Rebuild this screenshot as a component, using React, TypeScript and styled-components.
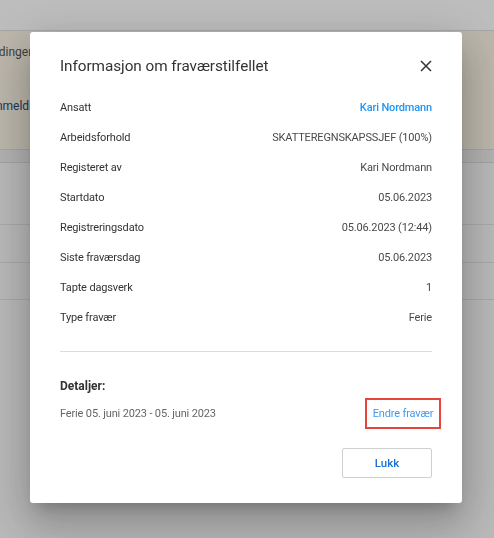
import React from 'react';
import styled, { createGlobalStyle } from 'styled-components';

const GlobalStyle = createGlobalStyle`
  html, body {
    margin: 0;
    padding: 0;
    background: #f8f8f8;
    font-family: Roboto, 'Liberation Sans', Arial, sans-serif;
  }
  * { box-sizing: border-box; }
`;

const Page = styled.div`
  width: 494px;
  height: 538px;
  overflow: hidden;
  background: #f8f8f8;
`;

const TopBar = styled.div`
  height: 31px;
  background: #ffffff;
  border-bottom: 1px solid #e0e0e0;
`;

const Notice = styled.div`
  height: 118px;
  background: #fcf5e6;
  display: flex;
  flex-direction: column;
  padding: 14px 0 0;
  margin-left: -21px;
  gap: 40px;
  font-size: 12px;
  color: #555;
`;

const NoticeLink = styled.span`
  color: #264b7a;
  margin-left: 7px;
`;

const TableHead = styled.div`
  height: 14px;
  border-top: 1px solid #dcdcdc;
  border-bottom: 1px solid #dcdcdc;
  background: #efefef;
`;

const TableRow = styled.div<{ $h: number }>`
  height: ${({ $h }) => $h}px;
  border-bottom: 1px solid #e2e2e2;
`;

const Backdrop = styled.div`
  position: fixed;
  inset: 0;
  background: rgba(0, 0, 0, 0.26);
  display: flex;
  align-items: flex-start;
  justify-content: center;
  padding-top: 32px;
`;

const Dialog = styled.div`
  width: 432px;
  background: #fff;
  border-radius: 3px;
  margin-right: 2px;
  padding: 24px 30px 25px;
  box-shadow: 0 11px 15px -7px rgba(0, 0, 0, 0.2),
    0 24px 38px 3px rgba(0, 0, 0, 0.14), 0 9px 46px 8px rgba(0, 0, 0, 0.12);
`;

const Header = styled.div`
  display: flex;
  align-items: center;
  justify-content: space-between;
  height: 20px;
  margin-bottom: 16px;
`;

const Title = styled.h2`
  margin: 0;
  font-size: 15.3px;
  font-weight: 400;
  letter-spacing: -0.05px;
  color: #333;
  line-height: 20px;
`;

const CloseButton = styled.button`
  border: none;
  background: none;
  padding: 0;
  margin-right: -1px;
  width: 14px;
  height: 14px;
  display: flex;
  align-items: center;
  justify-content: center;
  cursor: pointer;
`;

const InfoRow = styled.div`
  display: flex;
  align-items: center;
  justify-content: space-between;
  height: 30px;
  font-size: 11px;
  letter-spacing: -0.15px;
`;

const Label = styled.span`
  color: #333;
`;

const Value = styled.span<{ $link?: boolean }>`
  color: ${({ $link }) => ($link ? '#2196f3' : '#4a4a4a')};
  font-weight: ${({ $link }) => ($link ? 500 : 400)};
`;

const Divider = styled.hr`
  border: none;
  border-top: 1px solid #d8dde3;
  margin: 19px 0 0;
`;

const SectionTitle = styled.div`
  margin-top: 25px;
  font-size: 12px;
  line-height: 18px;
  font-weight: 700;
  color: #333;
`;

const DetailRow = styled.div`
  margin-top: 3px;
  display: flex;
  align-items: center;
  justify-content: space-between;
  font-size: 11px;
  letter-spacing: -0.15px;
  color: #666;
  margin-right: -9px;
`;

const EditLink = styled.a`
  color: #3f9af0;
  text-decoration: none;
  border: 2px solid #e5453d;
  height: 31px;
  width: 76px;
  display: flex;
  align-items: center;
  justify-content: center;
`;

const Footer = styled.div`
  display: flex;
  justify-content: flex-end;
  margin-top: 19px;
`;

const Button = styled.button`
  width: 90px;
  height: 30px;
  background: #fff;
  border: 1px solid #cfcfcf;
  border-radius: 2px;
  color: #1a6fd8;
  font-family: inherit;
  font-size: 11.5px;
  font-weight: 500;
  cursor: pointer;
`;

const rows: [string, string, boolean?][] = [
  ['Ansatt', 'Kari Nordmann', true],
  ['Arbeidsforhold', 'SKATTEREGNSKAPSSJEF (100%)'],
  ['Registeret av', 'Kari Nordmann'],
  ['Startdato', '05.06.2023'],
  ['Registreringsdato', '05.06.2023 (12:44)'],
  ['Siste fraværsdag', '05.06.2023'],
  ['Tapte dagsverk', '1'],
  ['Type fravær', 'Ferie'],
];

export default function App() {
  return (
    <Page>
      <GlobalStyle />
      <TopBar />
      <Notice>
        <span>Meldinger</span>
        <NoticeLink>Innmeldinger</NoticeLink>
      </Notice>
      <TableHead />
      <TableRow $h={62} />
      <TableRow $h={38} />
      <TableRow $h={37} />
      <Backdrop>
        <Dialog>
          <Header>
            <Title>Informasjon om fraværstilfellet</Title>
            <CloseButton aria-label="Lukk">
              <svg width="12" height="12" viewBox="0 0 12 12">
                <path d="M1 1L11 11M11 1L1 11" stroke="#333" strokeWidth="1.5" />
              </svg>
            </CloseButton>
          </Header>
          {rows.map(([label, value, link]) => (
            <InfoRow key={label}>
              <Label>{label}</Label>
              <Value $link={link}>{value}</Value>
            </InfoRow>
          ))}
          <Divider />
          <SectionTitle>Detaljer:</SectionTitle>
          <DetailRow>
            <span>Ferie 05. juni 2023 - 05. juni 2023</span>
            <EditLink href="#">Endre fravær</EditLink>
          </DetailRow>
          <Footer>
            <Button>Lukk</Button>
          </Footer>
        </Dialog>
      </Backdrop>
    </Page>
  );
}
